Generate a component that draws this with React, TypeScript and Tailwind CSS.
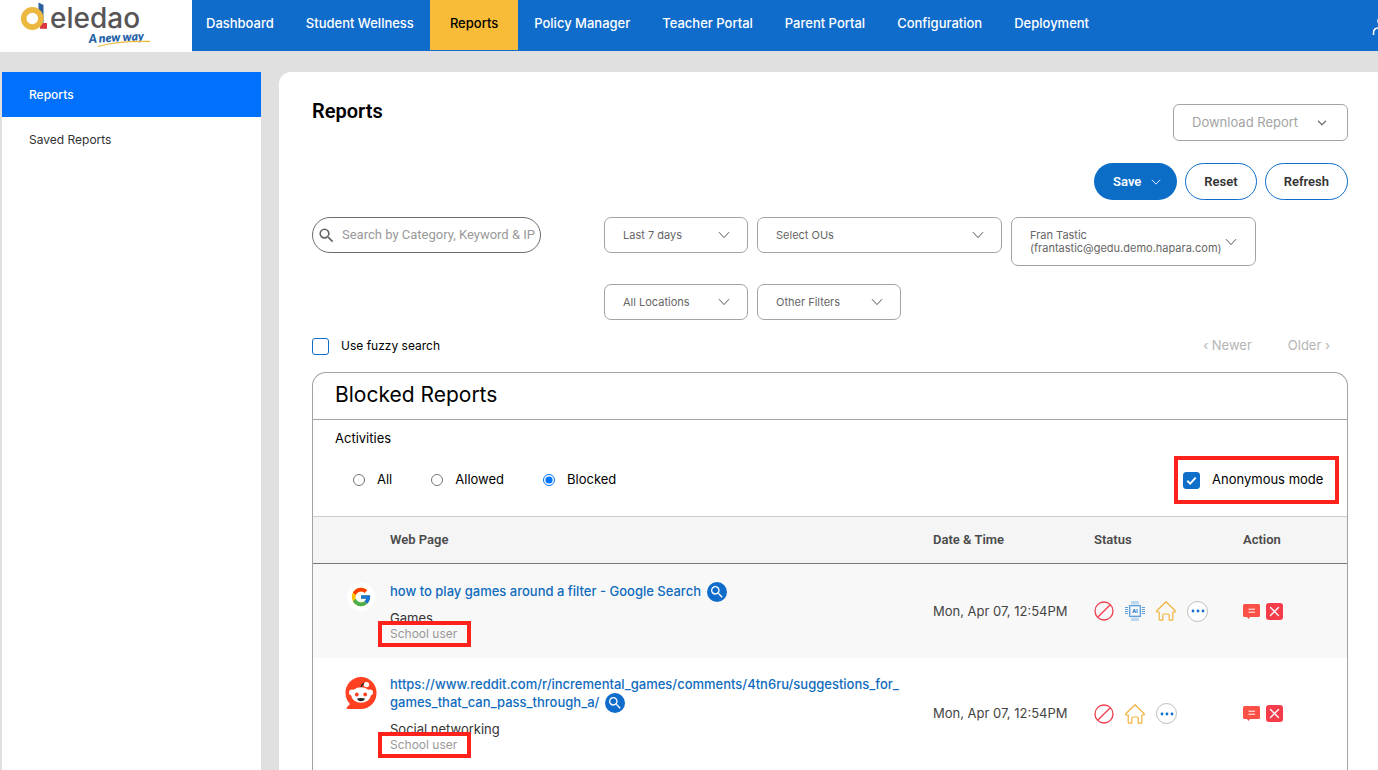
import React, { useState } from "react";
import { FcGoogle } from "react-icons/fc";
import { MdSearch } from "react-icons/md";

const navItems = [
  "Dashboard",
  "Student Wellness",
  "Reports",
  "Policy Manager",
  "Teacher Portal",
  "Parent Portal",
  "Configuration",
  "Deployment",
];

const Chevron = ({ className }: { className?: string }) => (
  <svg
    viewBox="0 0 12 8"
    fill="none"
    stroke="currentColor"
    strokeWidth="1"
    className={className}
    aria-hidden="true"
  >
    <path d="M1 1.200 6 6.600 11 1.200" />
  </svg>
);

const Logo = () => (
  <svg viewBox="0 0 192 52" className="h-[52px] w-48" role="img" aria-label="Deledao">
    <path d="M38.500 2.500 43.500 5V23h-5z" fill="#2b5f9e" />
    <path d="M40 23h7v5.800h-7z" fill="#d9363e" />
    <circle cx="32.300" cy="18.500" r="8.600" fill="none" stroke="#ecb83f" strokeWidth="5.600" />
    <text x="50" y="28" fontFamily="Inter, sans-serif" fontSize="28" fontWeight="500" fill="#575556">
      eledao
    </text>
    <text
      x="89"
      y="43"
      fontFamily="Lato, sans-serif"
      fontSize="12"
      fontWeight="800"
      fontStyle="italic"
      fill="#1f62a9"
      transform="rotate(-3 89 43)"
    >
      A new way
    </text>
    <path d="M98 46.500C112 42.500 130 41 150 41.500" fill="none" stroke="#ecb83f" strokeWidth="1.300" />
  </svg>
);

const RedditIcon = () => (
  <svg viewBox="0 0 32 32" className="h-8 w-8" aria-hidden="true">
    <path
      d="M16 0a15.700 15.700 0 0 1 15.500 16A15.700 15.700 0 0 1 16 32H2.500c-1 0-1.300-1-.6-1.700L5 27A16 16 0 0 1 .5 16 15.700 15.700 0 0 1 16 0z"
      fill="#ff4122"
    />
    <path d="M16 11c.3-3 2.200-4.800 5-4.600" fill="none" stroke="#222" strokeWidth="1.300" />
    <circle cx="21.500" cy="7.600" r="2.700" fill="#fff" />
    <circle cx="7" cy="15.500" r="3" fill="#fff" />
    <circle cx="25" cy="15.500" r="3" fill="#fff" />
    <ellipse cx="16" cy="18" rx="9.800" ry="7.800" fill="#fff" />
    <ellipse cx="11.800" cy="17.500" rx="1.900" ry="2.100" fill="#ff4122" />
    <ellipse cx="20.200" cy="17.500" rx="1.900" ry="2.100" fill="#ff4122" />
    <path d="M12 21.500c2.500-.7 5.500-.7 8 0-.6 1.700-2.100 2.700-4 2.700s-3.400-1-4-2.700z" fill="#222" />
  </svg>
);

const GoogleIcon = () => (
  <span className="flex h-7 w-7 items-center justify-center rounded-full bg-white">
    <FcGoogle className="h-[22px] w-[22px]" />
  </span>
);

const BlockedIcon = () => (
  <svg viewBox="0 0 20 20" className="h-5 w-5" fill="none" stroke="#f23d4f" strokeWidth="1.300">
    <title>Blocked</title>
    <circle cx="10" cy="10" r="9" />
    <path d="M16.300 3.700 3.700 16.300" />
  </svg>
);

const AiIcon = () => (
  <svg viewBox="0 0 20 20" className="h-5 w-5" fill="none" stroke="#5da0dc">
    <title>AI</title>
    <rect x="4.500" y="4.500" width="11" height="11" strokeWidth="1" />
    <rect x="5.500" y="5.500" width="9" height="9" strokeWidth="1" opacity=".35" />
    <path
      d="M7 0v3.500M9 0v3.500M11 0v3.500M13 0v3.500M7 16.500V20M9 16.500V20M11 16.500V20M13 16.500V20"
      strokeWidth="1.200"
      opacity=".6"
    />
    <path d="M0 6.500h3.200M0 8.500h3.200M0 10.500h3.200M0 12.500h3.200M16.800 6.500H20M16.800 8.500H20M16.800 10.500H20M16.800 12.500H20" />
    <text
      x="10"
      y="12"
      textAnchor="middle"
      fontFamily="Inter, sans-serif"
      fontSize="5"
      fontWeight="800"
      fill="#2f80cc"
      stroke="none"
    >
      AI
    </text>
  </svg>
);

const HomeIcon = () => (
  <svg
    viewBox="0 0 20 20"
    className="h-5 w-5"
    fill="none"
    stroke="#efb23d"
    strokeWidth="1.200"
    strokeLinejoin="round"
  >
    <title>Home</title>
    <path d="M10 .8.800 9.800v1.200h2.400v7.200c0 .6.400 1 1 1h2.600v-5c0-.7.400-1.200 1.200-1.200h4c.8 0 1.200.5 1.200 1.200v5h2.600c.6 0 1-.4 1-1V11h2.400V9.800z" />
  </svg>
);

const MoreButton = () => (
  <button
    type="button"
    aria-label="More"
    className="flex h-[21px] w-[21px] items-center justify-center rounded-full border border-[#bdbdbd] bg-white"
  >
    <svg viewBox="0 0 14 4" className="h-1 w-3.5" fill="#0f6fc9" aria-hidden="true">
      <circle cx="2" cy="2" r="1.400" />
      <circle cx="7" cy="2" r="1.400" />
      <circle cx="12" cy="2" r="1.400" />
    </svg>
  </button>
);

const RowActions = () => (
  <div className="flex items-center gap-1.5">
    <button type="button" aria-label="Comment">
      <svg viewBox="0 0 17 17" className="h-[17px] w-[17px]">
        <path
          d="M1.500 1h14A1.500 1.500 0 0 1 17 2.500V12.500a1.500 1.500 0 0 1-1.500 1.500H7l-1.500 2L4 14H1.500A1.500 1.500 0 0 1 0 12.500V2.500A1.500 1.500 0 0 1 1.500 1z"
          fill="#fa5046"
        />
        <path d="M5.500 6.200h6.500M5.500 9.200h6.500" stroke="#fff" strokeWidth="1" />
      </svg>
    </button>
    <button type="button" aria-label="Block">
      <svg viewBox="0 0 17 17" className="h-[17px] w-[17px]">
        <rect width="17" height="17" rx="3" fill="#f43c4b" />
        <path d="m4.500 4.500 8 8M12.500 4.500l-8 8" stroke="#fff" strokeWidth="1.400" strokeLinecap="round" />
      </svg>
    </button>
  </div>
);

type selectProps = {
  label: string;
  value: string;
  className: string;
};

const FilterSelect = ({ label, value, className }: selectProps) => (
  <div className={`relative h-9 ${className}`}>
    <select
      aria-label={label}
      className="h-full w-full appearance-none rounded-[7px] border border-[#a3a3a3] bg-white pr-9 pl-[18px] text-[11px] text-[#666]"
    >
      <option>{value}</option>
    </select>
    <Chevron className="pointer-events-none absolute top-3.5 right-[18px] h-2 w-3 text-[#555]" />
  </div>
);

type checkProps = {
  label: string;
  checked: boolean;
  onChange: (checked: boolean) => void;
};

const CheckField = ({ label, checked, onChange }: checkProps) => (
  <label className="flex items-center gap-3">
    <span className="relative flex h-[17px] w-[17px]">
      <input
        type="checkbox"
        checked={checked}
        onChange={(e) => onChange(e.target.checked)}
        className="h-full w-full appearance-none rounded-[3px] border border-[#0f6fc9] bg-white checked:bg-[#0f6fc9]"
      />
      {checked && (
        <svg
          viewBox="0 0 17 17"
          fill="none"
          stroke="#fff"
          strokeWidth="2"
          className="pointer-events-none absolute inset-0"
          aria-hidden="true"
        >
          <path d="m4.300 8.800 2.900 2.800 5.500-6" />
        </svg>
      )}
    </span>
    {label}
  </label>
);

const rows = [
  {
    icon: <GoogleIcon />,
    title: ["how to play games around a filter - Google Search"],
    category: "Games",
    status: [<BlockedIcon />, <AiIcon />, <HomeIcon />, <MoreButton />],
  },
  {
    icon: <RedditIcon />,
    title: [
      "https://www.reddit.com/r/incremental_games/comments/4tn6ru/suggestions_for_",
      "games_that_can_pass_through_a/",
    ],
    category: "Social networking",
    status: [<BlockedIcon />, <HomeIcon />, <MoreButton />],
  },
];

const Header = () => (
  <header className="flex h-[52px] shrink-0 overflow-hidden">
    <div className="w-48 shrink-0 bg-white">
      <Logo />
    </div>
    <div className="flex h-[51px] min-w-0 flex-1 justify-between bg-[#106ccb]">
      <nav className="-ml-0.5 flex shrink-0 text-[13px] font-medium text-white">
        {navItems.map((item) => (
          <a
            key={item}
            href="#"
            className={
              item === "Reports"
                ? "flex h-[50px] items-center bg-[#f9bc38] px-5 pb-0.5 text-black"
                : "flex h-[50px] items-center px-4 pb-0.5"
            }
          >
            {item}
          </a>
        ))}
      </nav>
      <button type="button" aria-label="Account" className="-mr-3 shrink-0 text-white">
        <svg viewBox="0 0 18 20" className="h-5 w-[18px]" fill="none" stroke="currentColor" strokeWidth="1.500">
          <circle cx="10" cy="5" r="4" />
          <path d="M1.500 19v-2c0-3 2-5 5-5h5c3 0 5 2 5 5v2" />
        </svg>
      </button>
    </div>
  </header>
);

const Sidebar = () => (
  <aside className="ml-0.5 w-[259px] shrink-0 bg-white text-[12px]">
    <a href="#" className="flex h-[45px] items-center bg-[#0071fc] px-[27px] font-medium text-white">
      Reports
    </a>
    <a href="#" className="flex h-[45px] items-center px-[27px] text-[#333]">
      Saved Reports
    </a>
  </aside>
);

const ReportTable = () => (
  <table className="w-full table-fixed text-left">
    <thead>
      <tr className="h-[47px] border-t border-b border-t-[#ccc] border-b-[#777] bg-[#f5f5f5] font-[Roboto] text-[13px] text-[#4a4a4a]">
        <td className="w-[77px]" />
        <th className="font-semibold">Web Page</th>
        <th className="w-[161px] font-semibold">Date &amp; Time</th>
        <th className="w-[149px] font-semibold">Status</th>
        <th className="w-[104px] font-semibold">Action</th>
      </tr>
    </thead>
    <tbody>
      {rows.map((row) => (
        <tr key={row.category} className="text-[13px] leading-[17px] odd:bg-[#f8f8f8] even:bg-white">
          <td className="pt-[19px] align-top">
            <div className="ml-8 flex w-8 justify-center">{row.icon}</div>
          </td>
          <td className="py-[18px]">
            <a href="#" className="font-medium text-[#0f6bbd]">
              {row.title.map((part, i) => (
                <React.Fragment key={part}>
                  {i > 0 && <wbr />}
                  {part}
                </React.Fragment>
              ))}
            </a>
            <button
              type="button"
              aria-label="Inspect page"
              className="ml-1.5 inline-flex h-5 w-5 items-center justify-center rounded-full bg-[#106ccb] align-middle text-white"
            >
              <MdSearch className="h-4 w-4" />
            </button>
            <p className="mt-2 text-[#333]">{row.category}</p>
            <div className="relative text-[12px] leading-[13px] text-[#999]">
              School user
              <div className="absolute -top-1.5 -left-3 h-[26px] w-[93px] border-4 border-[#ff211b]" />
            </div>
          </td>
          <td className="text-[#444]">Mon, Apr 07, 12:54PM</td>
          <td>
            <div className="flex items-center gap-[11px]">
              {row.status.map((icon, i) => (
                <React.Fragment key={i}>{icon}</React.Fragment>
              ))}
            </div>
          </td>
          <td>
            <RowActions />
          </td>
        </tr>
      ))}
    </tbody>
  </table>
);

const App = () => {
  const [activity, setActivity] = useState("Blocked");
  const [fuzzy, setFuzzy] = useState(false);
  const [anonymous, setAnonymous] = useState(true);

  return (
    <div className="flex h-screen flex-col overflow-hidden bg-[#e0e0e0] font-[Inter,sans-serif]">
      <Header />
      <div className="flex min-h-0 flex-1 gap-[18px] pt-5">
        <Sidebar />
        <main className="flex min-w-0 flex-1 flex-col overflow-hidden rounded-tl-xl bg-white pr-[30px] pl-[33px]">
          <div className="flex items-start justify-between pt-8">
            <h1 className="-mt-2 font-[Roboto] text-[20px] leading-[30px] font-semibold text-black">
              Reports
            </h1>
            <button
              type="button"
              className="flex h-[37px] min-w-[175px] items-center justify-between rounded-md border border-[#a3a3a3] px-[18px] text-[13px] text-[#a3a3a3]"
            >
              Download Report
              <svg
                viewBox="0 0 10 6"
                className="mr-0.5 h-1.5 w-2.5 text-[#777]"
                fill="none"
                stroke="currentColor"
                strokeWidth="1.300"
                aria-hidden="true"
              >
                <path d="M1 .8 5 4.800 9 .8" />
              </svg>
            </button>
          </div>

          <div className="mt-[22px] flex justify-end gap-2 font-[Roboto] text-[13px] font-semibold text-[#333]">
            <button
              type="button"
              className="flex h-[37px] items-center gap-2.5 rounded-full bg-[#0c6dc7] pr-4 pl-[19px] text-white"
            >
              Save
              <Chevron className="h-2 w-2.5" />
            </button>
            <button type="button" className="h-[37px] rounded-full border border-[#106ccb] px-[18px]">
              Reset
            </button>
            <button type="button" className="h-[37px] rounded-full border border-[#106ccb] px-[18px]">
              Refresh
            </button>
          </div>

          <div className="mt-[17px] flex items-start gap-[63px]">
            <label className="flex h-9 w-[229px] shrink-0 items-center gap-1.5 rounded-full border border-[#6b6b6b] px-1">
              <MdSearch className="h-[19px] w-[19px] shrink-0 text-[#666]" />
              <input
                type="text"
                aria-label="Search"
                placeholder="Search by Category, Keyword & IP"
                className="min-w-0 flex-1 font-[Roboto] text-[13px] outline-none placeholder:text-[#999]"
              />
            </label>
            <div className="flex min-w-0 flex-1 flex-wrap items-start gap-x-[9px] gap-y-[18px]">
              <FilterSelect label="Period" value="Last 7 days" className="w-36" />
              <FilterSelect label="OUs" value="Select OUs" className="w-[245px]" />
              <button
                type="button"
                className="flex h-[49px] w-[245px] items-center justify-between rounded-[7px] border border-[#a3a3a3] pr-[18px] pl-[18px] text-left text-[11px] leading-[13px] text-[#666]"
              >
                <span className="min-w-0">
                  Fran Tastic
                  <br />
                  (frantastic@gedu.demo.hapara.com)
                </span>
                <Chevron className="h-2 w-3 shrink-0 text-[#555]" />
              </button>
              <FilterSelect label="Locations" value="All Locations" className="w-36" />
              <FilterSelect label="Filters" value="Other Filters" className="w-36" />
            </div>
          </div>

          <div className="mt-4 flex h-5 items-center justify-between text-[12px] text-black">
            <CheckField label="Use fuzzy search" checked={fuzzy} onChange={setFuzzy} />
            <div className="flex gap-9 pr-[18px] text-[13px] text-[#b5b5b5]">
              <button type="button">‹ Newer</button>
              <button type="button">Older ›</button>
            </div>
          </div>

          <section className="mt-4 flex-1 rounded-t-[14px] border border-b-0 border-[#a3a3a3]">
            <h2 className="flex h-[47px] items-center border-b border-[#a3a3a3] px-[22px] pb-0.5 text-[21px] text-black">
              Blocked Reports
            </h2>
            <div className="px-[22px] pt-2 text-[13px] text-black">
              <p className="leading-5">Activities</p>
              <div className="mt-2 flex items-center justify-between pb-3">
                <div className="flex items-center gap-[39px] pl-[18px]">
                  {["All", "Allowed", "Blocked"].map((name) => (
                    <label key={name} className="flex items-center gap-3">
                      <input
                        type="radio"
                        name="activity"
                        checked={activity === name}
                        onChange={() => setActivity(name)}
                        className="h-3 w-3"
                      />
                      {name}
                    </label>
                  ))}
                </div>
                <div className="-mr-3.5 flex h-12 min-w-[165px] items-center border-4 border-[#ff211b] px-[5px]">
                  <CheckField label="Anonymous mode" checked={anonymous} onChange={setAnonymous} />
                </div>
              </div>
            </div>
            <ReportTable />
          </section>
        </main>
      </div>
    </div>
  );
};

export default App;
